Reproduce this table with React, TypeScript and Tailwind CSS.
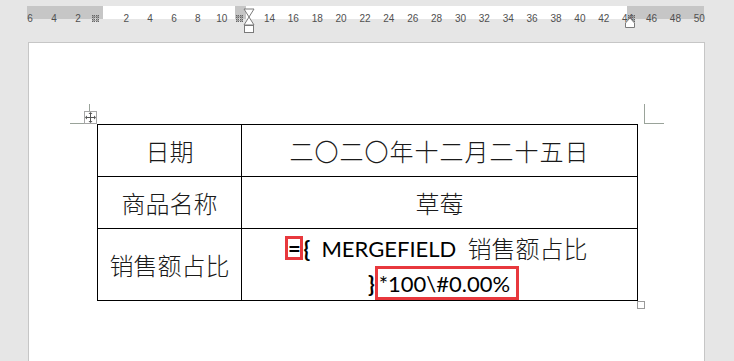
import React from "react";

const rightNums = [2, 4, 6, 8, 10, 14, 16, 18, 20, 22, 24, 26, 28, 30, 32, 34, 36, 38, 40, 42, 44, 46, 48, 50];

function GridIcon() {
  const dots: React.ReactElement[] = [];
  for (let r = 0; r < 4; r++)
    for (let c = 0; c < 4; c++)
      dots.push(<rect key={`${r}-${c}`} x={c * 2} y={r * 2} width="1" height="1" fill="#666" />);
  return (
    <svg width="8" height="8" viewBox="0 0 8 8">
      {dots}
      <rect x="0" y="1" width="7" height="0.6" fill="#888" />
      <rect x="0" y="5" width="7" height="0.6" fill="#888" />
      <rect x="1" y="0" width="0.6" height="7" fill="#888" />
      <rect x="5" y="0" width="0.6" height="7" fill="#888" />
    </svg>
  );
}

function Ruler() {
  const labels = [
    { t: "6", x: 30 },
    { t: "4", x: 54 },
    { t: "2", x: 78 },
    ...rightNums.map((n) => ({ t: String(n), x: 102.3 + 11.94 * n })),
  ];
  return (
    <div className="relative">
      <div className="ml-[27px] mt-[6px] flex h-[13px]">
        <div className="w-[76px] bg-[#c6c6c6]" />
        <div className="w-[132px] bg-white" />
        <div className="w-[11px] bg-[#c6c6c6]" />
        <div className="w-[381px] bg-white" />
        <div className="w-[77px] bg-[#c6c6c6]" />
      </div>
      {labels.map((l) => (
        <span
          key={l.t + l.x}
          className="absolute top-[6px] h-[13px] w-[24px] text-center text-[10px] leading-[13px] text-[#505050] [font-family:'Liberation_Sans',sans-serif]"
          style={{ left: l.x - 12 }}
        >
          {l.t}
        </span>
      ))}
      <span className="absolute left-[92px] top-[9px] flex">
        <GridIcon />
      </span>
      <span className="absolute left-[236px] top-[9px] flex">
        <GridIcon />
      </span>
      <span className="absolute left-[628px] top-[9px] flex">
        <GridIcon />
      </span>
      {/* hourglass indent marker */}
      <svg className="absolute left-[243px] top-[2px]" width="12" height="26" viewBox="0 0 12 26">
        <path d="M1 1 H11 L6 9 Z" fill="white" stroke="#7a7a7a" strokeWidth="1" />
        <path d="M6 9 L11 17 H1 Z" fill="white" stroke="#7a7a7a" strokeWidth="1" />
        <rect x="1.5" y="17.5" width="9" height="7" fill="white" stroke="#7a7a7a" strokeWidth="1" />
      </svg>
      {/* right indent marker */}
      <svg className="absolute left-[624px] top-[11px]" width="12" height="12" viewBox="0 0 12 12">
        <path d="M1.5 6 L6 1 L10.5 6 V10.5 H1.5 Z" fill="white" stroke="#7a7a7a" strokeWidth="1" />
      </svg>
    </div>
  );
}

function MoveIcon() {
  return (
    <svg width="11" height="11" viewBox="0 0 11 11" fill="#555">
      <rect x="5" y="1.5" width="1" height="8" />
      <rect x="1.5" y="5" width="8" height="1" />
      <path d="M5.5 0 L7.5 2 H3.5 Z" />
      <path d="M5.5 11 L7.5 9 H3.5 Z" />
      <path d="M0 5.5 L2 3.5 V7.5 Z" />
      <path d="M11 5.5 L9 3.5 V7.5 Z" />
    </svg>
  );
}

const cjk = "[font-family:'Noto_Sans_CJK_SC',sans-serif] font-light text-[24px] text-[#1a1a1a]";
const latin = "[font-family:Lato,'Noto_Sans_CJK_SC',sans-serif] text-[22px] text-black";

export default function App() {
  return (
    <div className="h-[361px] w-[734px] overflow-hidden bg-[#e6e6e6]">
      <Ruler />
      <div className="relative ml-[28px] mt-[23px] h-[400px] w-[677px] border border-[#c6c6c6] bg-white">
        {/* margin corner marks */}
        <div className="absolute left-[60px] top-[61px] h-[19px] w-px bg-[#9aa39a]" />
        <div className="absolute left-[41px] top-[80px] h-px w-[14px] bg-[#9aa39a]" />
        <div className="absolute left-[615px] top-[61px] h-[20px] w-px bg-[#9aa39a]" />
        <div className="absolute left-[615px] top-[80px] h-px w-[20px] bg-[#9aa39a]" />
        {/* table move handle */}
        <div className="absolute left-[55px] top-[68px] flex h-[13px] w-[13px] items-center justify-center border border-[#a6a6a6] bg-white">
          <MoveIcon />
        </div>
        {/* resize handle */}
        <div className="absolute left-[608px] top-[258px] h-[8px] w-[8px] border border-[#9a9a9a] bg-white" />

        <div className="ml-[68px] mt-[81px] grid w-[541px] grid-cols-[144px_396px] grid-rows-[52px_52px_72px] border-l border-t border-black">
          <div className={`flex items-center justify-center border-b border-r border-black ${cjk}`}>日期</div>
          <div className={`flex items-center justify-center border-b border-r border-black tracking-[1px] ${cjk}`}>
            二〇二〇年十二月二十五日
          </div>
          <div className={`flex items-center justify-center border-b border-r border-black ${cjk}`}>商品名称</div>
          <div className={`flex items-center justify-center border-b border-r border-black ${cjk}`}>草莓</div>
          <div className={`flex items-center justify-center border-b border-r border-black ${cjk}`}>销售额占比</div>
          <div className="flex flex-col items-center border-b border-r border-black pt-[7px]">
            <div className="flex h-[24px] items-center whitespace-pre pr-[6px]">
              <span className={`flex h-[24px] w-[18px] items-center justify-center border-[3px] border-[#e8383d] font-bold ${latin}`}>
                =
              </span>
              <span className={`font-bold ${latin}`}>{"{"}</span>
              <span className={`font-normal ${latin}`}>{"  MERGEFIELD  "}</span>
              <span className={cjk}>销售额占比</span>
            </div>
            <div className="mt-[6px] flex h-[34px] items-center pl-[8px]">
              <span className={`font-bold ${latin}`}>{"}"}</span>
              <span className={`flex h-[34px] items-center border-[3px] border-[#e8383d] pl-[1px] pr-[6px] font-normal ${latin}`}>
                *100\#0.00%
              </span>
            </div>
          </div>
        </div>
      </div>
    </div>
  );
}
